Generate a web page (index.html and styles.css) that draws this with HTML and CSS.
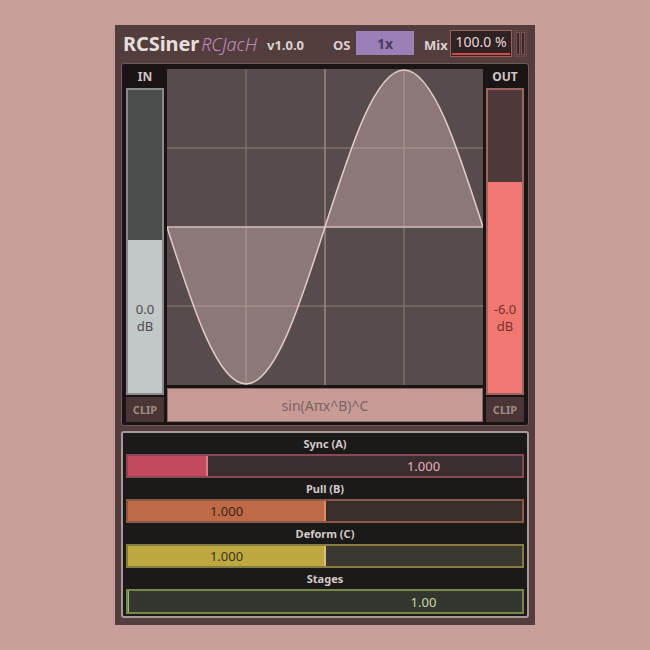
FILE: index.html
```html
<!DOCTYPE html>
<html>
<head>
<meta charset="utf-8">
<link rel="stylesheet" href="styles.css">
</head>
<body>
<div class="panel">
  <div class="header">
    <span class="logo"><span class="title">RCSiner</span><span class="brand">RCJacH</span></span>
    <span class="version">v1.0.0</span>
    <span class="os-label">OS</span>
    <div class="os-btn">1x</div>
    <span class="mix-label">Mix</span>
    <div class="mix-box">100.0 %</div>
    <div class="mini-meter"><span></span><span></span></div>
  </div>
  <div class="main">
    <div class="meter-col">
      <div class="meter-label">IN</div>
      <div class="meter meter-in">
        <div class="meter-fill fill-in"></div>
        <div class="meter-text text-in">0.0<br>dB</div>
      </div>
      <div class="clip">CLIP</div>
    </div>
    <div class="center">
      <svg class="graph" width="316" height="316" viewBox="0 0 316 316">
        <rect x="0" y="0" width="316" height="316" fill="#574c4c"/>
        <g stroke="#7e6e6e" stroke-width="1.5">
          <line x1="79" y1="0" x2="79" y2="316"/>
          <line x1="237" y1="0" x2="237" y2="316"/>
          <line x1="0" y1="79" x2="316" y2="79"/>
          <line x1="0" y1="237" x2="316" y2="237"/>
        </g>
        <g stroke="#9c8686" stroke-width="1.5">
          <line x1="158" y1="0" x2="158" y2="316"/>
        </g>
        <path d="M0 158 C25.76 238.43 50.41 315 79 315 C107.59 315 132.24 238.43 158 158 C183.76 77.57 208.41 1 237 1 C265.59 1 290.24 77.57 316 158 Z" fill="rgba(232,200,200,0.36)" stroke="none"/>
        <line x1="0" y1="158" x2="316" y2="158" stroke="#d8bcbc" stroke-width="1.5"/>
        <path d="M0 158 C25.76 238.43 50.41 315 79 315 C107.59 315 132.24 238.43 158 158 C183.76 77.57 208.41 1 237 1 C265.59 1 290.24 77.57 316 158" fill="none" stroke="#e6c8c8" stroke-width="1.5"/>
      </svg>
      <div class="formula">sin(Aπx^B)^C</div>
    </div>
    <div class="meter-col">
      <div class="meter-label">OUT</div>
      <div class="meter meter-out">
        <div class="meter-fill fill-out"></div>
        <div class="meter-text text-out">-6.0<br>dB</div>
      </div>
      <div class="clip">CLIP</div>
    </div>
  </div>
  <div class="controls">
    <div class="ctl-label">Sync (A)</div>
    <div class="slider s-sync">
      <div class="s-fill" style="width: 80px"></div>
      <div class="s-val val-right">1.000</div>
    </div>
    <div class="ctl-label">Pull (B)</div>
    <div class="slider s-pull">
      <div class="s-fill" style="width: 198px"></div>
      <div class="s-val val-left">1.000</div>
    </div>
    <div class="ctl-label">Deform (C)</div>
    <div class="slider s-deform">
      <div class="s-fill" style="width: 198px"></div>
      <div class="s-val val-left">1.000</div>
    </div>
    <div class="ctl-label">Stages</div>
    <div class="slider s-stages">
      <div class="s-fill" style="width: 1px"></div>
      <div class="s-val val-right">1.00</div>
    </div>
  </div>
</div>
</body>
</html>
```

FILE: styles.css
```css
html, body {
  margin: 0;
  padding: 0;
}
body {
  background: #c99f9b;
  width: 650px;
  height: 650px;
  font-family: "Noto Sans", "Open Sans", sans-serif;
}
.panel {
  position: relative;
  margin: 25px 0 0 115px;
  width: 420px;
  height: 600px;
  background: #533d3d;
  box-sizing: border-box;
  padding: 0 6px;
  display: flex;
  flex-direction: column;
}
.header {
  height: 38px;
  display: flex;
  align-items: center;
  padding-left: 2px;
  padding-bottom: 2px;
  box-sizing: border-box;
  white-space: nowrap;
}
.logo {
  width: 133px;
  display: flex;
  align-items: baseline;
}
.title {
  font-weight: 700;
  font-size: 20px;
  color: #e6dede;
  letter-spacing: -0.1px;
}
.brand {
  font-style: italic;
  font-weight: 300;
  font-size: 18px;
  color: #c58ac2;
  margin-left: 2px;
}
.version {
  width: 40px;
  font-weight: 700;
  font-size: 13px;
  color: #ddd3d3;
  margin-left: 11px;
  padding-top: 4px;
}
.os-label {
  width: 15px;
  font-weight: 700;
  font-size: 13px;
  color: #ddd3d3;
  margin-left: 26px;
  padding-top: 4px;
}
.os-btn {
  margin-left: 8px;
  width: 58px;
  height: 24px;
  background: #9a80b6;
  color: #4a3a5e;
  font-weight: 700;
  font-size: 14px;
  display: flex;
  align-items: center;
  justify-content: center;
}
.mix-label {
  width: 21px;
  font-weight: 700;
  font-size: 13px;
  color: #ddd3d3;
  margin-left: 10px;
  padding-top: 4px;
}
.mix-box {
  margin-left: 5px;
  width: 62px;
  height: 27px;
  box-sizing: border-box;
  border: 1px solid #9e5e5c;
  background: #2e2222;
  color: #e8d6d6;
  font-size: 14px;
  display: flex;
  align-items: center;
  justify-content: center;
  position: relative;
  padding-bottom: 3px;
}
.mix-box::after {
  content: "";
  position: absolute;
  left: 1px;
  right: 1px;
  bottom: 1px;
  height: 2px;
  background: #d44a40;
}
.mini-meter {
  margin-left: 2px;
  width: 13px;
  height: 27px;
  box-sizing: border-box;
  border: 1px solid #6e4646;
  display: flex;
  gap: 1px;
  padding: 1px;
}
.mini-meter span {
  flex: 1;
  background: #3a2828;
  border: 1px solid #7a5050;
}
.main {
  height: 363px;
  box-sizing: border-box;
  background: #1a1414;
  border: 1px solid #6e5a5a;
  border-radius: 3px;
  padding: 0 3px 3px 4px;
  display: flex;
  gap: 3px;
}
.meter-col {
  width: 38px;
  display: flex;
  flex-direction: column;
}
.meter-label {
  height: 24px;
  display: flex;
  align-items: center;
  justify-content: center;
  font-weight: 700;
  font-size: 12px;
  color: #cfc6c6;
}
.meter {
  height: 307px;
  box-sizing: border-box;
  position: relative;
  display: flex;
  flex-direction: column;
  justify-content: flex-end;
}
.meter-in {
  background: #4a4e4c;
  border: 2px solid #8a8c8c;
}
.meter-out {
  background: #4e3a3a;
  border: 2px solid #9c6462;
}
.fill-in {
  height: 153px;
  background: #c2c7c7;
}
.fill-out {
  height: 211px;
  background: #f07870;
}
.meter-text {
  position: absolute;
  left: 0;
  right: 0;
  top: 211px;
  text-align: center;
  font-size: 13px;
  line-height: 17px;
}
.text-in {
  color: #4a4c4c;
}
.text-out {
  color: #7a2e2c;
}
.clip {
  margin-top: 2px;
  height: 25px;
  background: #4a3636;
  color: #a08a8a;
  font-weight: 700;
  font-size: 11px;
  display: flex;
  align-items: center;
  justify-content: center;
}
.center {
  width: 316px;
  padding-top: 5px;
  display: flex;
  flex-direction: column;
  gap: 3px;
}
.graph {
  display: block;
}
.formula {
  height: 34px;
  box-sizing: border-box;
  background: #c99b97;
  border: 1px solid #8a6a6a;
  color: #7a6262;
  font-size: 14px;
  display: flex;
  align-items: center;
  justify-content: center;
}
.controls {
  margin-top: 5px;
  height: 187px;
  box-sizing: border-box;
  background: #1c1a19;
  border: 2px solid #a89898;
  border-radius: 3px;
  padding: 0 3px 2px 3px;
  display: flex;
  flex-direction: column;
}
.ctl-label {
  height: 21px;
  display: flex;
  align-items: center;
  justify-content: center;
  font-weight: 700;
  font-size: 11px;
  color: #d4caca;
}
.slider {
  height: 24px;
  box-sizing: border-box;
  border: 2px solid;
  display: flex;
  position: relative;
}
.s-fill {
  height: 100%;
  box-sizing: border-box;
  border-right: 2px solid;
}
.s-val {
  position: absolute;
  top: 0;
  bottom: 0;
  width: 50%;
  display: flex;
  align-items: center;
  justify-content: center;
  font-size: 13px;
}
.val-left { left: 0; }
.val-right { right: 0; }
.s-sync {
  border-color: #8a4856;
  background: #392d2e;
}
.s-sync .s-fill {
  background: #c2495e;
  border-right-color: #e07888;
}
.s-sync .s-val { color: #e8b2be; }
.s-pull {
  border-color: #8a5a48;
  background: #392e2c;
}
.s-pull .s-fill {
  background: #c06a47;
  border-right-color: #e08a62;
}
.s-pull .s-val { color: #3a2218; }
.s-deform {
  border-color: #857c40;
  background: #3a3630;
}
.s-deform .s-fill {
  background: #bea940;
  border-right-color: #d8c466;
}
.s-deform .s-val { color: #3a3418; }
.s-stages {
  border-color: #788848;
  background: #343630;
  height: 25px;
}
.s-stages .s-fill {
  background: #9cc060;
  border-right: none;
}
.s-stages .s-val { color: #c8dca2; }
```
